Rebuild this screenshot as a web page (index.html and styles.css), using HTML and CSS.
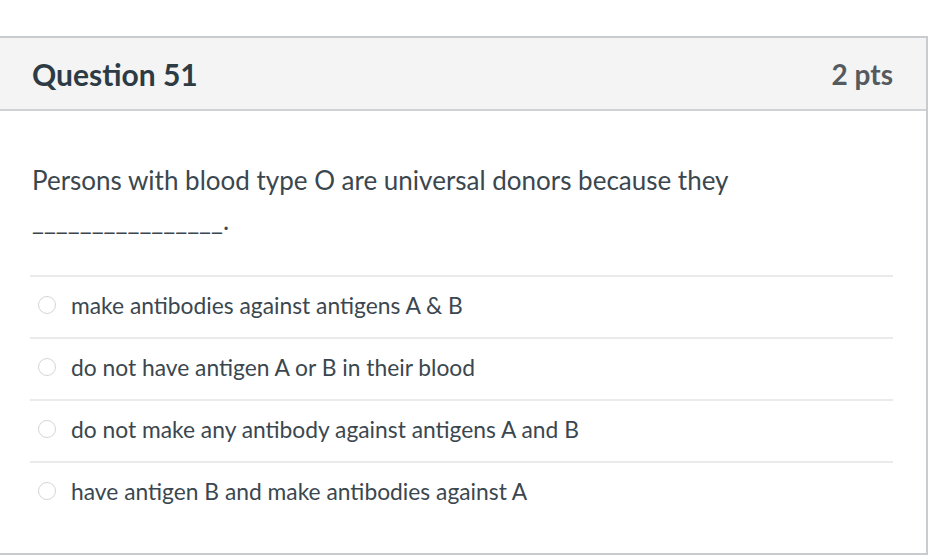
FILE: index.html
```html
<!DOCTYPE html>
<html>
<head>
<meta charset="utf-8">
<link rel="stylesheet" href="styles.css">
</head>
<body>
<div class="page">
  <div class="card">
    <div class="card-header">
      <span class="title">Question 51</span>
      <span class="pts">2 pts</span>
    </div>
    <div class="card-body">
      <p class="question">Persons with blood type O are universal donors because they<br>________________.</p>
      <ul class="answers">
        <li class="answer"><span class="radio"></span><span>make antibodies against antigens A &amp; B</span></li>
        <li class="answer"><span class="radio"></span><span>do not have antigen A or B in their blood</span></li>
        <li class="answer"><span class="radio"></span><span>do not make any antibody against antigens A and B</span></li>
        <li class="answer"><span class="radio"></span><span>have antigen B and make antibodies against A</span></li>
      </ul>
    </div>
  </div>
</div>
</body>
</html>
```

FILE: styles.css
```css
html, body {
  margin: 0;
  padding: 0;
  background: #fff;
}
.page {
  padding-top: 36px;
  font-family: Lato, "Open Sans", sans-serif;
  color: #2d3b45;
}
.card {
  margin-left: -2px;
  width: 930px;
  border: 2px solid #c8cccf;
  box-sizing: border-box;
  height: 519px;
}
.card-header {
  height: 71px;
  background: #f4f4f4;
  border-bottom: 2px solid #cfd3d6;
  display: flex;
  align-items: center;
  justify-content: space-between;
  padding: 0 33px 0 32px;
}
.title {
  font-weight: 700;
  font-size: 30px;
  color: #2d3b45;
}
.pts {
  font-weight: 700;
  font-size: 28px;
  color: #555a5e;
}
.card-body {
  padding: 0 33px 0 30px;
}
.question {
  margin: 0;
  padding: 49px 0 0 2px;
  font-size: 26px;
  line-height: 40px;
  color: #3b474f;
  height: 164px;
  box-sizing: border-box;
}
.answers {
  list-style: none;
  margin: 0;
  padding: 0;
}
.answer {
  display: flex;
  align-items: center;
  height: 62px;
  border-top: 2px solid #e8eaeb;
  box-sizing: border-box;
  font-size: 22.8px;
  color: #3b474f;
  padding-bottom: 5px;
}
.radio {
  width: 18px;
  height: 18px;
  border: 1.5px solid #d3d6d8;
  border-radius: 50%;
  margin: 0 15px 0 8px;
  box-sizing: border-box;
  flex: none;
}
```
